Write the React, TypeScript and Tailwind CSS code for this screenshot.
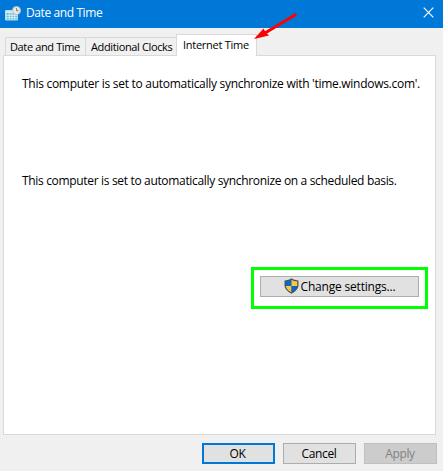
import React from "react";

function CalendarIcon() {
  return (
    <svg width="16" height="16" viewBox="0 0 16 16" className="shrink-0">
      <path d="M0.500 4.500H12.500V14H0.500Z" fill="#e9f8fc" stroke="#b5dbe8" />
      <path d="M1 5h11v2H1z" fill="#d3e9f0" />
      <path d="M1.500 7h10.500v6.500H1.500z" fill="#62bfd9" />
      <path d="M1.500 9.300h10.500M1.500 11.700h10.500M4.300 7v6.500M7 7v6.500M9.700 7v6.500" stroke="#e9f8fc" strokeWidth="0.800" />
      <circle cx="11.500" cy="4.500" r="4" fill="#e6e8e5" stroke="#bcbfbd" />
      <path d="M11.500 2.200v2.500h2" fill="none" stroke="#65767d" strokeWidth="0.9" />
    </svg>
  );
}

function ShieldIcon() {
  return (
    <svg width="15" height="16" viewBox="0 0 15 16" className="-mt-px shrink-0">
      <path d="M7.500 0.300C5.500 1.900 3 2.300 0.500 2.400V7.500C0.700 11 4 14 7.500 15.700C11 14 14.300 11 14.500 7.500V2.400C12 2.300 9.500 1.900 7.500 0.300Z" fill="#46535c" />
      <path d="M7.500 1.700C5.700 2.900 3.700 3.300 1.700 3.400V8H7.500Z" fill="#0869cc" />
      <path d="M7.500 1.700C9.300 2.900 11.300 3.300 13.300 3.400V8H7.500Z" fill="#ffc43d" />
      <path d="M1.700 8C2.200 11 5 13.200 7.500 14.500V8Z" fill="#ffc43d" />
      <path d="M13.300 8C12.800 11 10 13.200 7.500 14.500V8Z" fill="#0869cc" />
    </svg>
  );
}

export default function App() {
  return (
    <div className="relative flex h-[471px] w-[443px] flex-col overflow-hidden bg-[#f0f0f0] font-['Open_Sans','Noto_Sans',sans-serif] text-[12px] leading-4 tracking-[-0.370px] whitespace-nowrap text-black">
      <header className="flex h-7 shrink-0 items-center bg-[#0078d7] pr-[9px] pl-[5px] text-white">
        <CalendarIcon />
        <h1 className="-mt-[2px] ml-[5px] grow tracking-[-0.400px]">Date and Time</h1>
        <svg width="11" height="11" viewBox="0 0 11 11" className="-mt-[3px]">
          <path d="M0.700 0.700L10.300 10.300M10.300 0.700L0.700 10.300" stroke="white" strokeWidth="1.200" />
        </svg>
      </header>
      <nav className="flex h-[27px] shrink-0 items-end pl-[5px] text-[11px] tracking-[-0.370px]">
        <div className="flex h-[18px] w-[81px] items-center border border-b-0 border-[#d9d9d9] pl-[4px]">Date and Time</div>
        <div className="flex h-[18px] w-[90px] items-center border-t border-[#d9d9d9] pl-[5px]">Additional Clocks</div>
        <div className="relative z-10 -mb-px flex h-[22px] w-[81px] items-center border border-b-0 border-[#d9d9d9] bg-white pb-[2px] pl-[6px] tracking-[-0.270px]">Internet Time</div>
      </nav>
      <main className="ml-[3px] flex h-[380px] w-[433px] shrink-0 flex-col border border-[#d9d9d9] bg-white pl-[18px]">
        <p className="mt-5 tracking-[-0.280px]">This computer is set to automatically synchronize with 'time.windows.com'.</p>
        <p className="mt-[81px] tracking-[-0.330px]">This computer is set to automatically synchronize on a scheduled basis.</p>
        <div className="mt-[78px] ml-[229px] flex h-[42px] w-[177px] items-center justify-center border-[3px] border-[#00ff00]">
          <button className="-mt-[3px] flex h-[21px] w-[159px] items-center justify-center gap-[2px] border border-[#adadad] bg-[#e1e1e1] tracking-[-0.200px]">
            <ShieldIcon /><span>Change settings...</span>
          </button>
        </div>
      </main>
      <footer className="mt-2 flex justify-end gap-2 pr-[6px]">
        <button className="h-[21px] w-[73px] border-2 border-[#0078d7] bg-[#e1e1e1] pr-[2px] leading-[17px]">OK</button>
        <button className="h-[21px] w-[73px] border border-[#adadad] bg-[#e1e1e1] pr-px leading-[19px]">Cancel</button>
        <button className="h-[21px] w-[73px] border border-[#bfbfbf] bg-[#cccccc] pr-px leading-[19px] text-[#838383]">Apply</button>
      </footer>
      <svg width="46" height="28" viewBox="0 0 46 28" className="absolute top-[13px] left-[252px] z-20">
        <path d="M43 2L13 20" stroke="#ff0000" strokeWidth="3.200" strokeLinecap="round" />
        <path d="M2 26L11.500 15.500L13.500 19L17 22.500Z" fill="#ff0000" />
      </svg>
    </div>
  );
}
